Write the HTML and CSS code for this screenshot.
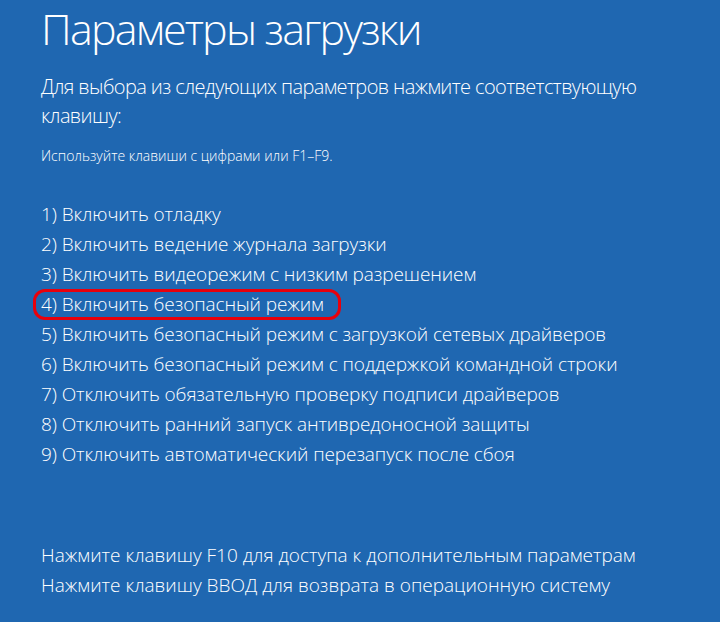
FILE: index.html
```html
<!DOCTYPE html>
<html lang="ru">
<head>
    <meta charset="UTF-8">
    <meta name="viewport" content="width=device-width, initial-scale=1.0">
    <title>Параметры загрузки</title>
    <link rel="stylesheet" href="styles.css">
</head>
<body>

<div class="screen">
    <h1 class="title">Параметры загрузки</h1>
    <p class="lead">Для выбора из следующих параметров нажмите соответствующую клавишу:</p>
    <p class="hint">Используйте клавиши с цифрами или F1–F9.</p>

    <ul class="options">
        <li>1) Включить отладку</li>
        <li>2) Включить ведение журнала загрузки</li>
        <li>3) Включить видеорежим с низким разрешением</li>
        <li class="marked"><span>4) Включить безопасный режим</span></li>
        <li>5) Включить безопасный режим с загрузкой сетевых драйверов</li>
        <li>6) Включить безопасный режим с поддержкой командной строки</li>
        <li>7) Отключить обязательную проверку подписи драйверов</li>
        <li>8) Отключить ранний запуск антивредоносной защиты</li>
        <li>9) Отключить автоматический перезапуск после сбоя</li>
    </ul>

    <div class="footer">
        <p>Нажмите клавишу F10 для доступа к дополнительным параметрам</p>
        <p>Нажмите клавишу ВВОД для возврата в операционную систему</p>
    </div>
</div>

</body>
</html>
```

FILE: styles.css
```css
html, body {
    margin: 0;
    height: 100%;
}
body {
    background-color: #1f67b1;
    color: #fff;
    font-family: "Open Sans", "Liberation Sans", sans-serif;
    font-weight: 300;
}
.screen {
    padding: 0 30px 0 41px;
}
.title {
    margin: 0;
    font-size: 43px;
    font-weight: 300;
    line-height: 58px;
    letter-spacing: -1.8px;
}
.lead {
    margin: 14px 0 0;
    font-size: 20px;
    line-height: 29px;
    letter-spacing: -0.6px;
}
.hint {
    margin: 16px 0 0;
    font-size: 14px;
    line-height: 20px;
}
.options {
    list-style: none;
    margin: 33px 0 0;
    padding: 0;
    font-size: 19px;
    letter-spacing: -0.1px;
}
.options li {
    height: 30px;
    line-height: 30px;
}
.options .marked span {
    display: inline-block;
    vertical-align: top;
    margin-left: -8px;
    padding: 0 14px 0 5px;
    border: 3px solid #e8000b;
    border-radius: 12px;
    line-height: 25px;
}
.footer {
    margin-top: 71px;
    font-size: 19px;
    line-height: 30px;
}
.footer p {
    margin: 0;
}
```
